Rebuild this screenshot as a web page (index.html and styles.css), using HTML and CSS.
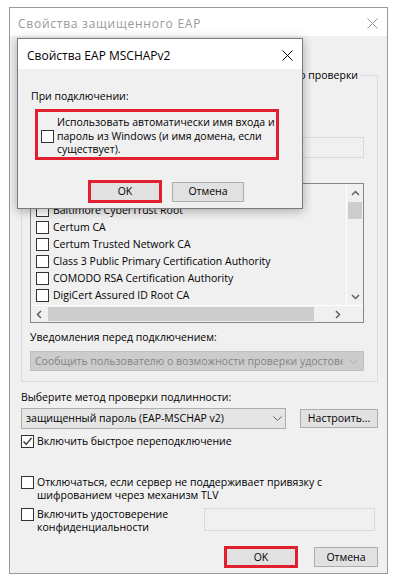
FILE: index.html
```html
<!DOCTYPE html>
<html lang="ru">

<head>
    <meta charset="UTF-8">
    <meta name="viewport" content="width=device-width, initial-scale=1.0">
    <title>Свойства защищенного EAP</title>
    <link rel="stylesheet" href="styles.css">
</head>

<body>
    <div class="window">
        <div class="titlebar">
            <span class="title">Свойства защищенного EAP</span>
            <svg class="close" width="11" height="11" viewBox="0 0 11 11"><path d="M0.5 0.5L10.5 10.5M10.5 0.5L0.5 10.5" /></svg>
        </div>
        <div class="content">
            <div class="group">
                <!-- the start of these rows sits under the MSCHAPv2 dialog -->
                <div class="legend"><span>до проверки</span></div>
                <div class="check-row"><span class="box"></span></div>
                <div class="caption two"></div>
                <div class="field server"></div>
                <div class="caption gap"></div>
                <div class="listbox">
                    <div class="list-main">
                        <div class="list-items">
                            <div class="item"><span class="box"></span></div>
                            <div class="item"><span class="box"></span>Baltimore CyberTrust Root</div>
                            <div class="item"><span class="box"></span>Certum CA</div>
                            <div class="item"><span class="box"></span>Certum Trusted Network CA</div>
                            <div class="item"><span class="box"></span>Class 3 Public Primary Certification Authority</div>
                            <div class="item"><span class="box"></span>COMODO RSA Certification Authority</div>
                            <div class="item"><span class="box"></span>DigiCert Assured ID Root CA</div>
                        </div>
                        <div class="vscroll">
                            <div class="arrow"><svg width="9" height="6" viewBox="0 0 9 6"><path d="M1 5L4.5 1.5L8 5" /></svg></div>
                            <div class="thumb vthumb"></div>
                            <div class="spacer"></div>
                            <div class="arrow"><svg width="9" height="6" viewBox="0 0 9 6"><path d="M1 1L4.5 4.5L8 1" /></svg></div>
                        </div>
                    </div>
                    <div class="hscroll">
                        <div class="arrow"><svg width="6" height="9" viewBox="0 0 6 9"><path d="M5 1L1.5 4.5L5 8" /></svg></div>
                        <div class="thumb hthumb"></div>
                        <div class="spacer"></div>
                        <div class="arrow"><svg width="6" height="9" viewBox="0 0 6 9"><path d="M1 1L4.5 4.5L1 8" /></svg></div>
                        <div class="corner"></div>
                    </div>
                </div>
                <div class="caption notify">Уведомления перед подключением:</div>
                <div class="select disabled">
                    <span class="select-text">Сообщить пользователю о возможности проверки удостоверения сервера</span>
                    <svg class="chev" width="9" height="5" viewBox="0 0 9 5"><path d="M0.5 0.5L4.5 4.5L8.5 0.5" /></svg>
                </div>
            </div>

            <div class="caption method-label">Выберите метод проверки подлинности:</div>
            <div class="method-row">
                <div class="select method">
                    <span class="select-text">защищенный пароль (EAP-MSCHAP v2)</span>
                    <svg class="chev" width="9" height="5" viewBox="0 0 9 5"><path d="M0.5 0.5L4.5 4.5L8.5 0.5" /></svg>
                </div>
                <button class="btn setup">Настроить...</button>
            </div>

            <div class="check-row fast">
                <span class="box"><svg width="11" height="11" viewBox="0 0 11 11"><path d="M1.5 5.5L4.2 8.3L9.5 2" /></svg></span>Включить быстрое переподключение
            </div>
            <div class="check-row multi tlv">
                <span class="box"></span><span>Отключаться, если сервер не поддерживает привязку с<br>шифрованием через механизм TLV</span>
            </div>
            <div class="privacy-row">
                <div class="check-row multi"><span class="box"></span><span>Включить удостоверение<br>конфиденциальности</span></div>
                <div class="field identity"></div>
            </div>

            <div class="buttons">
                <button class="btn ok hl">OK</button>
                <button class="btn cancel">Отмена</button>
            </div>
        </div>
    </div>

    <div class="dialog">
        <div class="dlg-titlebar">
            <span class="dlg-title">Свойства EAP MSCHAPv2</span>
            <svg class="dlg-close" width="11" height="11" viewBox="0 0 11 11"><path d="M0.5 0.5L10.5 10.5M10.5 0.5L0.5 10.5" /></svg>
        </div>
        <div class="dlg-body">
            <div class="caption">При подключении:</div>
            <div class="hl-box">
                <div class="check-row dlg-check"><span class="box"></span><span>Использовать автоматически имя входа и<br>пароль из Windows (и имя домена, если<br>существует).</span></div>
            </div>
            <div class="dlg-buttons">
                <button class="btn dlg-ok hl">OK</button>
                <button class="btn dlg-cancel">Отмена</button>
            </div>
        </div>
    </div>
</body>

</html>
```

FILE: styles.css
```css
body {
    margin: 0;
    padding: 7px 0 0 9px;
    background: #fff;
    font-family: "Open Sans", "Noto Sans", sans-serif;
    font-size: 10.5px;
    line-height: 13px;
    color: #000;
}

/* outer window */

.window {
    box-sizing: border-box;
    width: 379px;
    height: 567px;
    border: 1px solid #9a9a9a;
    background: #f0f0f0;
}

.titlebar {
    height: 28px;
    background: #fff;
    display: flex;
    align-items: center;
    justify-content: space-between;
    padding: 3px 9px 0 8px;
    box-sizing: border-box;
}

.title {
    font-size: 12px;
    letter-spacing: 0.75px;
    color: #999;
}

.close path {
    stroke: #999;
    stroke-width: 1;
    fill: none;
}

.content {
    padding: 0 9px 0 11px;
}

.group {
    margin-top: 39px;
    border: 1px solid #dcdcdc;
    padding: 0 13px 10px 8px;
}

.legend {
    width: 330px;
    height: 15px;
    line-height: 15px;
    margin-top: -8px;
    text-align: right;
    white-space: nowrap;
    overflow: hidden;
}

.legend span {
    background: #f0f0f0;
    padding: 0 2px;
}

.caption {
    height: 13px;
    white-space: nowrap;
}

.two {
    height: 26px;
    margin-top: 5px;
}

.gap {
    margin-top: 6px;
}

.notify {
    margin-top: 8px;
}

.method-label {
    margin-top: 9px;
}

/* checkboxes */

.check-row {
    display: flex;
    align-items: center;
    gap: 3px;
    white-space: nowrap;
}

.group > .check-row {
    margin-top: 6px;
}

.box {
    flex-shrink: 0;
    box-sizing: border-box;
    width: 13px;
    height: 13px;
    border: 1px solid #333;
    background: #fff;
    display: flex;
    align-items: center;
    justify-content: center;
}

.box path {
    stroke: #333;
    stroke-width: 1.3;
    fill: none;
}

.multi {
    align-items: flex-start;
}

.fast {
    margin-top: 6px;
}

.tlv {
    margin-top: 28px;
}

/* text fields */

.field {
    box-sizing: border-box;
    border: 1px solid #d9d9d9;
    background: #f0f0f0;
}

.server {
    height: 21px;
    margin-top: 4px;
}

.privacy-row {
    display: flex;
    align-items: flex-start;
    margin-top: 6px;
}

.identity {
    width: 171px;
    height: 23px;
    margin-left: auto;
    margin-right: 3px;
}

/* certificate list */

.listbox {
    margin-top: 6px;
    height: 140px;
    box-sizing: border-box;
    border: 1px solid #828790;
    background: #f0f0f0;
    display: flex;
    flex-direction: column;
}

.list-main {
    display: flex;
    height: 121px;
}

.list-items {
    flex: 1;
    overflow: hidden;
    padding: 1px 0 0 5px;
}

.item {
    height: 17px;
    display: flex;
    align-items: center;
    gap: 4px;
    white-space: nowrap;
}

.vscroll {
    width: 17px;
    display: flex;
    flex-direction: column;
    border-left: 1px solid #fff;
    box-sizing: border-box;
}

.hscroll {
    height: 17px;
    display: flex;
    border-top: 1px solid #fff;
    box-sizing: border-box;
}

.arrow {
    width: 16px;
    height: 16px;
    flex-shrink: 0;
    display: flex;
    align-items: center;
    justify-content: center;
}

.vscroll .arrow {
    height: 17px;
}

.arrow path {
    stroke: #606060;
    stroke-width: 1.5;
    fill: none;
}

.spacer {
    flex: 1;
}

.thumb {
    background: #cdcdcd;
}

.vthumb {
    height: 17px;
    margin: 1px 1px 0;
}

.hthumb {
    width: 266px;
    margin: 1px 0 1px 1px;
}

.corner {
    width: 17px;
}

/* dropdowns */

.select {
    box-sizing: border-box;
    height: 20px;
    display: flex;
    align-items: center;
    padding-left: 4px;
    border: 1px solid #adadad;
    background: #e5e5e5;
}

.group .select {
    margin-top: 7px;
}

.select.disabled {
    border-color: #bfbfbf;
    background: #cccccc;
    color: #838383;
}

.select-text {
    flex: 1;
    overflow: hidden;
    white-space: nowrap;
}

.chev {
    flex-shrink: 0;
    margin: 0 5px 0 6px;
}

.chev path {
    stroke: #606060;
    stroke-width: 1;
    fill: none;
}

.disabled .chev path {
    stroke: #b0b0b0;
}

.method-row {
    display: flex;
    align-items: center;
    margin-top: 4px;
}

.method {
    width: 265px;
    height: 21px;
}

.method .chev {
    margin-right: 3px;
}

/* buttons */

.btn {
    box-sizing: border-box;
    font: inherit;
    color: #000;
    background: #e1e1e1;
    border: 1px solid #adadad;
    padding: 0;
    height: 20px;
}

.setup {
    width: 78px;
    height: 19px;
    margin-left: 14px;
}

.hl {
    border: 3px solid #e0202e;
}

.buttons {
    display: flex;
    justify-content: flex-end;
    align-items: center;
    gap: 16px;
    margin-top: 12px;
}

.ok {
    width: 74px;
    height: 22px;
}

.cancel {
    width: 64px;
}

/* EAP MSCHAPv2 dialog, opened over the window */

.dialog {
    position: absolute;
    left: 17px;
    top: 38px;
    box-sizing: border-box;
    width: 286px;
    height: 171px;
    border: 1px solid #7a7a7a;
    background: #f0f0f0;
    box-shadow: 0 2px 10px rgba(0, 0, 0, 0.3);
}

.dlg-titlebar {
    height: 30px;
    background: #fff;
    display: flex;
    align-items: center;
    justify-content: space-between;
    padding: 3px 9px 0 9px;
    box-sizing: border-box;
}

.dlg-title {
    font-size: 12px;
}

.dlg-close path {
    stroke: #000;
    stroke-width: 1;
    fill: none;
}

.dlg-body {
    padding: 21px 0 0 13px;
}

.hl-box {
    box-sizing: border-box;
    width: 244px;
    height: 51px;
    margin: 6px 0 0 4px;
    border: 3px solid #e0202e;
    padding: 4px 3px 0;
}

.dlg-check {
    line-height: 13.5px;
}

.dlg-buttons {
    display: flex;
    align-items: center;
    gap: 10px;
    margin-top: 20px;
    padding-left: 57px;
}

.dlg-ok {
    width: 74px;
    height: 23px;
}

.dlg-cancel {
    width: 72px;
}
```
